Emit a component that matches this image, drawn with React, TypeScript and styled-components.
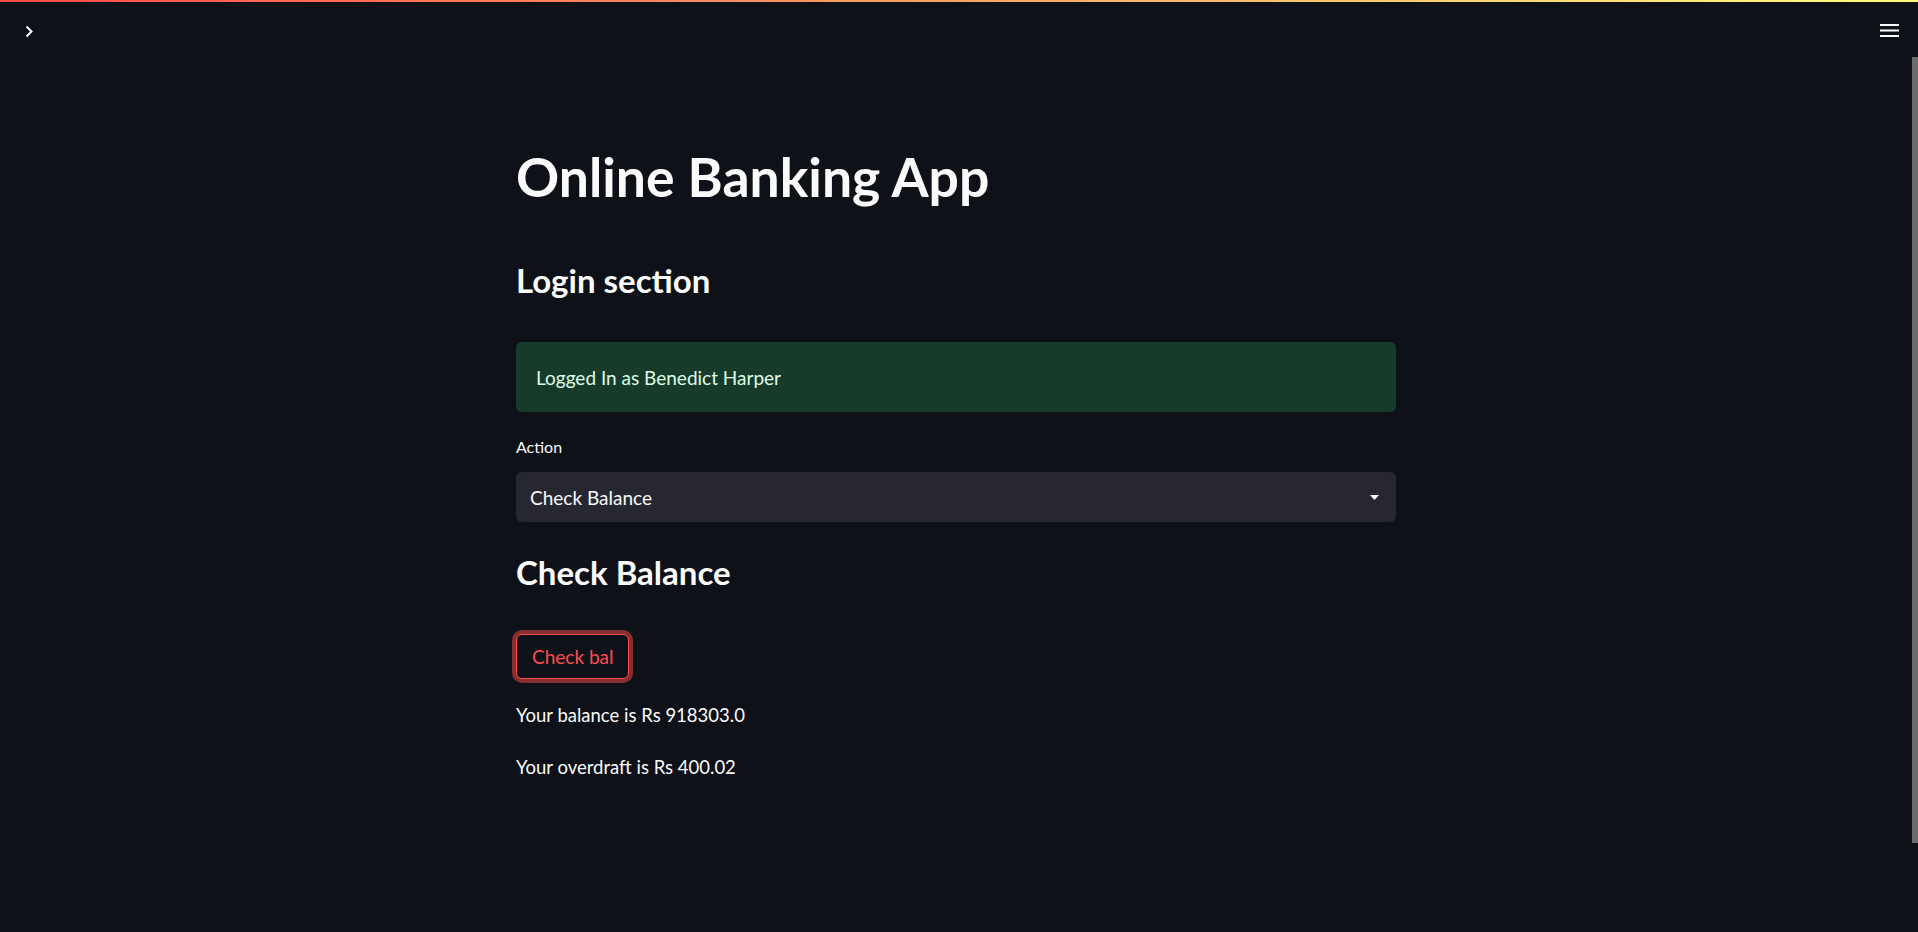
import React from "react";
import styled, { createGlobalStyle } from "styled-components";

const Global = createGlobalStyle`
  html, body { margin: 0; padding: 0; background: #0e1117; }
  body { font-family: Lato, "Noto Sans", sans-serif; color: #fafafa; overflow: hidden; }
  * { box-sizing: border-box; }
`;

const Root = styled.div`
  min-height: 100vh;
  height: 932px;
  background: #0e1117;
  display: flex;
  flex-direction: column;
`;

const Decoration = styled.div`
  height: 2px;
  flex: none;
  background: linear-gradient(90deg, rgb(255, 75, 75), rgb(255, 253, 128));
`;

const Body = styled.div`
  flex: 1;
  display: flex;
  flex-direction: row;
`;

const Content = styled.div`
  flex: 1;
  display: flex;
  flex-direction: column;
`;

const Header = styled.header`
  height: 58px;
  display: flex;
  align-items: center;
  justify-content: space-between;
  padding: 0 13px 0 25px;
`;

const IconButton = styled.button`
  background: none;
  border: none;
  padding: 0;
  display: flex;
  align-items: center;
  justify-content: center;
  color: #fafafa;
  cursor: pointer;
`;

const Main = styled.main`
  width: 880px;
  margin: 0 auto;
  padding-top: 85px;
  display: flex;
  flex-direction: column;
  align-items: flex-start;
`;

const Title = styled.h1`
  margin: 0;
  font-size: 53.5px;
  line-height: 62px;
  font-weight: 700;
  color: #fafafa;
`;

const SubHeader = styled.h3<{ $mt: number }>`
  margin: ${(p) => p.$mt}px 0 0;
  font-size: 33px;
  line-height: 40px;
  font-weight: 700;
  color: #fafafa;
`;

const Alert = styled.div`
  margin-top: 42px;
  width: 100%;
  height: 70px;
  padding: 0 20px;
  display: flex;
  align-items: center;
  background: #173b2a;
  border-radius: 6px;
  color: #dffde9;
  font-size: 19px;
`;

const Label = styled.label`
  margin-top: 25px;
  font-size: 16px;
  line-height: 20px;
  color: #fafafa;
`;

const Select = styled.div`
  margin-top: 15px;
  width: 100%;
  height: 50px;
  padding: 0 17px 0 14px;
  display: flex;
  align-items: center;
  justify-content: space-between;
  background: #262730;
  border-radius: 6px;
  font-size: 19px;
  color: #fafafa;
`;

const Button = styled.button`
  margin-top: 42px;
  height: 45px;
  padding: 0 15px;
  background: #0e1117;
  border: 1px solid #ff4b4b;
  border-radius: 6px;
  box-shadow: 0 0 0 4px rgba(255, 75, 75, 0.5);
  color: #ff4b4b;
  font-family: inherit;
  font-size: 19px;
  white-space: nowrap;
  display: flex;
  align-items: center;
  justify-content: center;
`;

const Text = styled.p<{ $mt: number }>`
  margin: ${(p) => p.$mt}px 0 0;
  font-size: 18.5px;
  line-height: 28px;
  color: #fafafa;
`;

const ScrollTrack = styled.div`
  width: 6px;
  flex: none;
  padding-top: 55px;
`;

const ScrollThumb = styled.div`
  height: 786px;
  background: #6b6b6b;
`;

export default function App() {
  return (
    <Root>
      <Global />
      <Decoration />
      <Body>
        <Content>
          <Header>
            <IconButton aria-label="Open sidebar">
              <svg width="8" height="13" viewBox="0 0 8 13">
                <polyline points="1.5,1.5 6.5,6.5 1.5,11.5" fill="none" stroke="#fafafa" strokeWidth="2" />
              </svg>
            </IconButton>
            <IconButton aria-label="Menu">
              <svg width="19" height="14" viewBox="0 0 19 14">
                <rect x="0" y="0" width="19" height="2" fill="#fafafa" />
                <rect x="0" y="5.5" width="19" height="2" fill="#fafafa" />
                <rect x="0" y="11" width="19" height="2" fill="#fafafa" />
              </svg>
            </IconButton>
          </Header>
          <Main>
            <Title>Online Banking App</Title>
            <SubHeader $mt={53}>Login section</SubHeader>
            <Alert>Logged In as Benedict Harper</Alert>
            <Label>Action</Label>
            <Select>
              <span>Check Balance</span>
              <svg width="9" height="5" viewBox="0 0 9 5">
                <polygon points="0,0 9,0 4.5,5" fill="#fafafa" />
              </svg>
            </Select>
            <SubHeader $mt={30}>Check Balance</SubHeader>
            <Button>Check bal</Button>
            <Text $mt={22}>Your balance is Rs 918303.0</Text>
            <Text $mt={24}>Your overdraft is Rs 400.02</Text>
          </Main>
        </Content>
        <ScrollTrack>
          <ScrollThumb />
        </ScrollTrack>
      </Body>
    </Root>
  );
}
